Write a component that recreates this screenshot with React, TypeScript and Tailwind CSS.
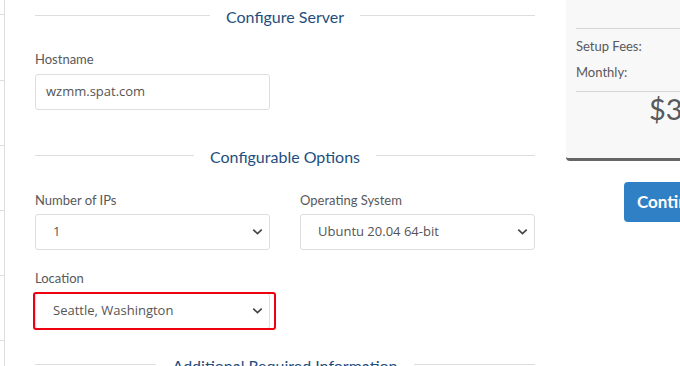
import type { ReactNode } from "react";

const lato = { fontFamily: "Lato, 'Liberation Sans', sans-serif" };
const openSans = { fontFamily: "'Open Sans', 'Liberation Sans', sans-serif" };

function SubHeading({ title }: { title: string }) {
  return (
    <div className="flex h-[20px] items-center">
      <div className="h-px flex-1 bg-[#dddddd]" />
      <span className="relative top-[2px] px-4 text-[16px] leading-5 text-[#1f4e7e]" style={lato}>
        {title}
      </span>
      <div className="h-px flex-1 bg-[#dddddd]" />
    </div>
  );
}

function Label({ children }: { children: ReactNode }) {
  return (
    <div className="text-[13px] leading-[18px] text-[#58595b]" style={lato}>
      {children}
    </div>
  );
}

function Chevron() {
  return (
    <svg width="11" height="8" viewBox="0 0 11 8" className="text-[#444]">
      <path d="M1.3 1.7 5.5 5.7 9.7 1.7" fill="none" stroke="currentColor" strokeWidth="1.7" />
    </svg>
  );
}

function Select({ value }: { value: string }) {
  return (
    <div className="flex h-[36px] items-center justify-between rounded-[3px] border border-[#dedede] bg-white pl-[17px] pr-[6px]">
      <span className="text-[13px] text-[#555]" style={openSans}>
        {value}
      </span>
      <Chevron />
    </div>
  );
}

export default function App() {
  return (
    <div className="flex h-[366px] w-[680px] overflow-hidden bg-white">
      {/* cut-off sidebar */}
      <div className="flex w-[5px] shrink-0 flex-col border-r border-[#dddddd]">
        <div className="h-[15px] border-b border-[#dddddd]" />
        <div className="h-[66px] border-b border-[#dddddd]" />
        <div className="h-[65px] border-b border-[#dddddd]" />
        <div className="h-[65px] border-b border-[#dddddd]" />
        <div className="h-[65px] border-b border-[#dddddd]" />
        <div className="h-[65px] border-b border-[#dddddd]" />
      </div>

      <div className="ml-[30px] flex w-[500px] shrink-0 flex-col pt-[5px]">
        <SubHeading title="Configure Server" />

        <div className="mt-[25px]">
          <Label>Hostname</Label>
          <div className="mt-[6px] flex h-[36px] w-[235px] items-center rounded-[3px] border border-[#dedede] px-[10px]">
            <span className="text-[13px] text-[#555]" style={openSans}>
              wzmm.spat.com
            </span>
          </div>
        </div>

        <div className="mt-[35px]">
          <SubHeading title="Configurable Options" />
        </div>

        <div className="mt-[26px] grid grid-cols-2 gap-x-[30px]">
          <div>
            <Label>Number of IPs</Label>
            <div className="mt-[5px]">
              <Select value="1" />
            </div>
          </div>
          <div>
            <Label>Operating System</Label>
            <div className="mt-[5px]">
              <Select value="Ubuntu 20.04 64-bit" />
            </div>
          </div>
          <div className="mt-[19px]">
            <Label>Location</Label>
            <div className="relative mt-[6px]">
              <Select value="Seattle, Washington" />
              <div className="absolute -top-[1px] -left-[2px] -right-[6px] -bottom-[1px] rounded-[3px] border-2 border-[#ee0011]" />
            </div>
          </div>
        </div>

        <div className="mt-[25px]">
          <SubHeading title="Additional Required Information" />
        </div>
      </div>

      <div className="ml-[31px] flex shrink-0 flex-col">
        <div className="h-[161px] w-[140px] rounded-bl-[4px] border-b-[3px] border-[#666] bg-[#f8f8f8] pl-[10px]" style={lato}>
          <div className="mt-[28px] h-px bg-[#d6d6d6]" />
          <div className="mt-[8px] text-[13px] leading-[18px] text-[#58595b]">Setup Fees:</div>
          <div className="mt-[8px] text-[13px] leading-[18px] text-[#58595b]">Monthly:</div>
          <div className="mt-[10px] h-px bg-[#d6d6d6]" />
          <div className="pl-[73px] text-[29px] leading-[34px] text-[#58595b]">$3</div>
        </div>
        <div
          className="ml-[58px] mt-[21px] flex h-[40px] w-[100px] items-center rounded-[4px] bg-[#2f80c5] pl-[13px] text-[17px] font-bold text-white"
          style={lato}
        >
          Continue
        </div>
      </div>
    </div>
  );
}
